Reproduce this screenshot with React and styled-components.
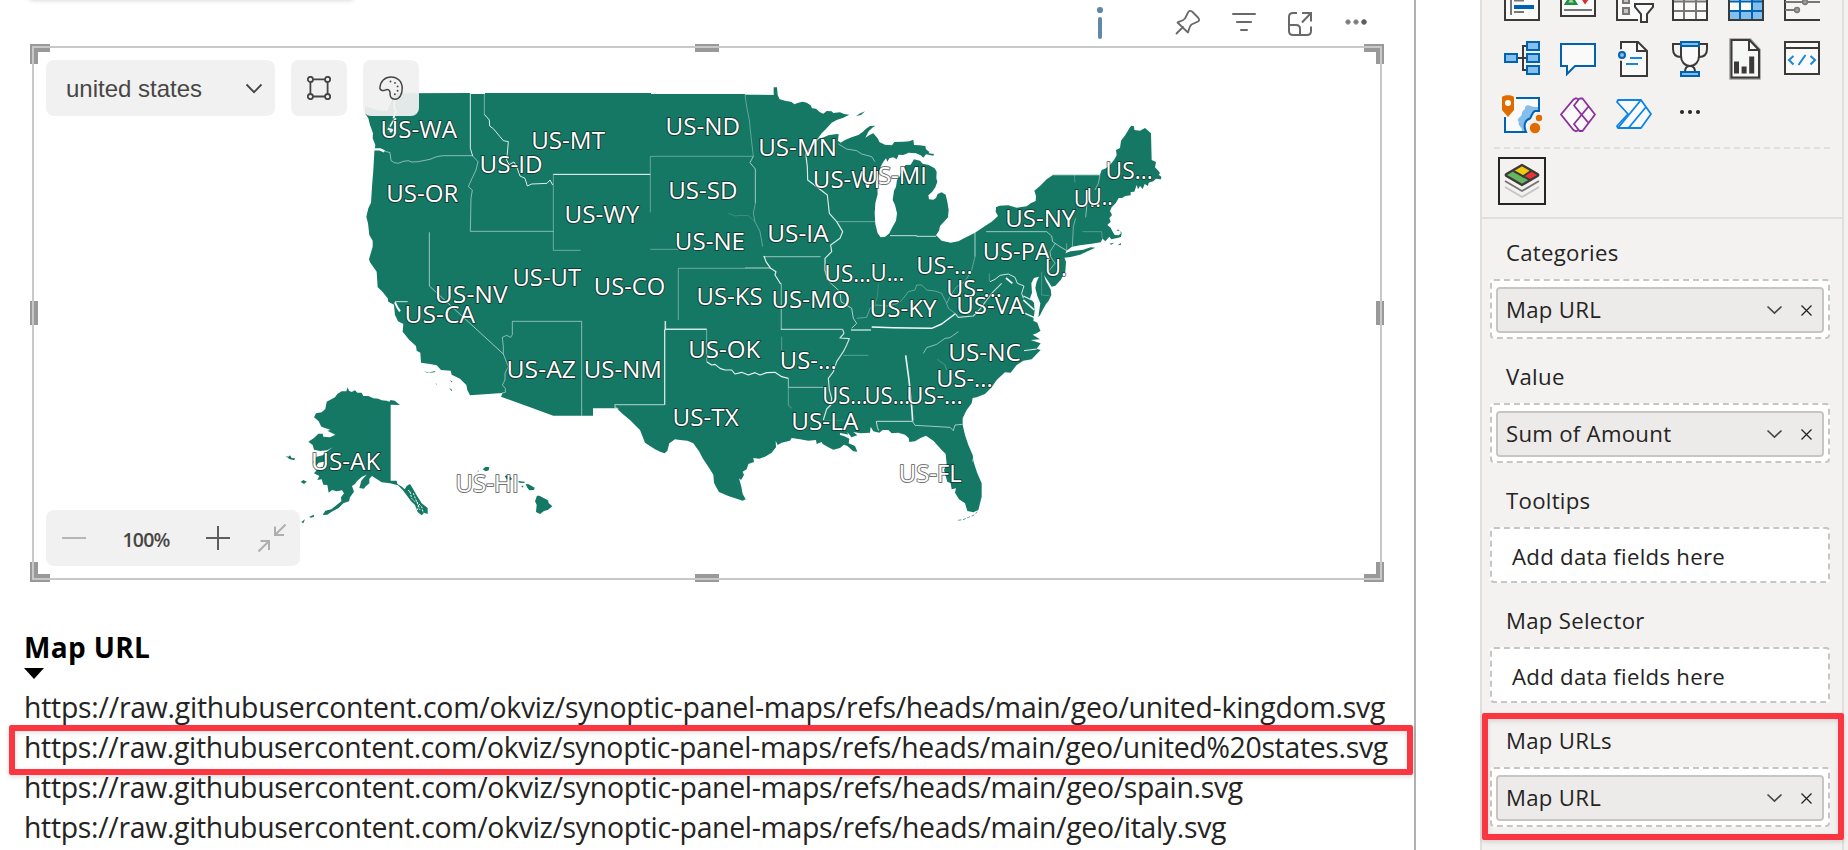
import React from "react";
import styled, { createGlobalStyle, css } from "styled-components";

const GlobalStyle = createGlobalStyle`
  * { box-sizing: border-box; }
  body {
    margin: 0;
    overflow: hidden;
    background: #fff;
    color: #252423;
    font-family: "Open Sans", "Noto Sans", sans-serif;
  }
  svg { display: block; }
`;

/* ---------- page ---------- */

const Page = styled.div`
  display: flex;
  width: 1848px;
  height: 850px;
  overflow: hidden;
`;

const Canvas = styled.main`
  position: relative;
  width: 1416px;
  height: 850px;
  border-right: 2px solid #b3b0ad;
`;

const CardAbove = styled.div`
  position: absolute;
  left: 30px;
  top: -20px;
  width: 323px;
  height: 20px;
  box-shadow: 0 0 5px rgba(0, 0, 0, 0.2);
`;

const calloutFrame = css`
  &::after {
    content: "";
    position: absolute;
    inset: ${(p) => p.$inset};
    border: 6px solid #fb3640;
    border-radius: 2px;
    box-shadow: 0 2px 5px rgba(0, 0, 0, 0.14), inset 0 2px 5px rgba(0, 0, 0, 0.12);
    pointer-events: none;
  }
`;

/* ---------- visual ---------- */

const VisualHeader = styled.header`
  display: flex;
  justify-content: flex-end;
  align-items: flex-start;
  height: 46px;
  padding: 6px 42px 0 0;
`;

const HeaderIcon = styled.span`
  width: 32px;
  height: 36px;
  margin-left: ${(p) => p.$gap || 24}px;
`;

const VisualFrame = styled.section`
  position: relative;
  width: 1350px;
  height: 534px;
  margin-left: 32px;
  border: 2px solid #c8c8c8;
`;

const Handle = styled.i`
  position: absolute;
  z-index: -1;
  background: #999;
  width: ${(p) => (p.$tall ? 8 : 24)}px;
  height: ${(p) => (p.$tall ? 24 : 8)}px;
  ${(p) => p.$side}: -4px;
  ${(p) => (p.$tall ? "top: 253px;" : "left: 661px;")}
`;

const Corner = styled.i`
  position: absolute;
  z-index: -1;
  width: 20px;
  height: 20px;
  border: 0 solid #999;
  ${(p) => p.$v}: -4px;
  ${(p) => p.$h}: -4px;
  border-${(p) => p.$v}-width: 8px;
  border-${(p) => p.$h}-width: 8px;
`;

const MapBar = styled.div`
  position: absolute;
  left: 12px;
  display: flex;
  height: 56px;
  ${(p) => p.$edge}: 12px;
  gap: 16px;
`;

const BarBox = styled.div`
  display: flex;
  align-items: center;
  justify-content: space-between;
  width: ${(p) => p.$width}px;
  height: 56px;
  padding: ${(p) => p.$pad || "0"};
  border-radius: 8px;
  background: rgba(240, 240, 240, 0.94);
  color: #484644;
`;

const MapName = styled.span`
  padding-top: 2px;
  font: 24px/54px "Liberation Sans", Arial, sans-serif;
`;

const ZoomValue = styled.span`
  flex: 1;
  padding-top: 3px;
  font-size: 19.5px;
  font-weight: 600;
  line-height: 53px;
  letter-spacing: -0.8px;
  text-align: center;
`;

const ResetZoom = styled.span`
  margin-left: 28px;
`;

/* ---------- url table ---------- */

const UrlTable = styled.section`
  padding: 47px 0 0 24px;
`;

const ColumnTitle = styled.h2`
  margin: 0;
  color: #000;
  font-size: 28px;
  font-weight: 700;
  line-height: 40px;
  letter-spacing: 0.35px;
`;

const SortArrow = styled.div`
  width: 20px;
  height: 11px;
  margin: 1px 0 8px 0;
  background: #000;
  clip-path: polygon(0 0, 100% 0, 50% 100%);
`;

const UrlRow = styled.div`
  position: relative;
  height: 40px;
  font-size: 28.4px;
  line-height: 41px;
  letter-spacing: ${(p) => p.$tracking}px;
  white-space: nowrap;
  ${(p) => p.$inset && calloutFrame}
`;

/* ---------- visualizations pane ---------- */

const PaneArea = styled.aside`
  width: 368px;
  margin-left: 64px;
  padding-right: 4px;
  background: #f3f2f1;
`;

const Pane = styled.div`
  height: 850px;
  border: solid #e1dfdd;
  border-width: 0 2px;
`;

const Gallery = styled.div`
  height: 219px;
  border-bottom: 2px solid #e1dfdd;
`;

const IconGrid = styled.div`
  display: grid;
  grid-template-columns: repeat(6, 36px);
  grid-auto-rows: 36px;
  gap: 20px;
  margin-top: -15px;
  padding-left: 22px;
`;

const GridWrap = styled.div`
  display: flex;
  height: 147px;
`;

const GalleryRule = styled.div`
  height: 2px;
  margin: 0 12px;
  background: repeating-linear-gradient(90deg, #e1dfdd 0 6px, transparent 6px 10px);
`;

const SelectedVisual = styled.div`
  width: 48px;
  height: 48px;
  margin: 8px 0 0 16px;
  border: 2px solid #252423;
`;

const Wells = styled.div`
  display: flex;
  flex-direction: column;
  gap: 20px;
  padding: 16px 12px 0 8px;
`;

const Well = styled.div`
  position: relative;
  font-size: 22.2px;
  letter-spacing: 0.28px;
  ${(p) => p.$inset && calloutFrame}
`;

const WellLabel = styled.div`
  height: 44px;
  padding-left: 16px;
  line-height: 35px;
`;

const DropZone = styled.div`
  height: ${(p) => (p.$filled ? 60 : 56)}px;
  padding: ${(p) => (p.$filled ? "6px 4px" : "0 20px")};
  border: 2px dashed #c8c6c4;
  border-radius: 4px;
  background: #fff;
  line-height: 55px;
`;

const FieldPill = styled.div`
  display: flex;
  align-items: center;
  justify-content: space-between;
  height: 46px;
  padding: 0 10px 0 8px;
  border: 2px solid #c8c6c4;
  border-radius: 4px;
  background: #edebe9;
  line-height: 46px;
`;

/* ---------- map geometry ---------- */

// The map is kept in survey sheets; each has its own origin on the drawing.
const SHEETS = {
  nw: [1020, 210],
  north: [1920, 210],
  ne: [2820, 240],
  sw: [720, 930],
  south: [1920, 930],
};

const place = (sheet, points) => {
  const [dx, dy] = SHEETS[sheet];
  return points
    .trim()
    .split(/\s+/)
    .map((p) => {
      const [x, y] = p.split(",").map(Number);
      return `${x + dx},${y + dy}`;
    })
    .join(" ");
};

const MAINLAND = [
  ["nw", "75,108 110,120 140,123 152,100 160,80 170,70 391,69 391,72 435,72 435,69 933,69 933,72"],
  [
    "north",
    `315,72 401,74 401,52 411,52 413,75 419,88 435,92 455,96 463,103 475,98 488,95 500,98 512,106 516,115 528,116 540,127 550,131
     560,123 575,124 580,129 600,127 612,132 628,134 610,143 590,150 575,158 560,175 545,190 533,206 548,203 565,196 585,193 596,192
     594,212 602,218 615,210 635,202 655,195 668,186 678,176 690,168 706,167 697,173 686,184 676,203 690,194 700,190 714,206 718,216
     735,224 756,226 763,216 790,215 808,214 820,209 822,225 838,226 856,228 858,238 868,246 866,250 882,252 880,257 858,253 850,263
     842,256 828,250 806,248 790,255 776,254 770,268 760,262 748,265 742,275 738,265 730,275 722,290 716,315 712,345 713,372 706,400
     704,430 706,462 713,490 722,502 736,500 748,490 757,472 768,452 771,430 765,405 758,390 762,362 768,350 771,330 780,318 784,300
     797,285 812,284 822,268 840,272 848,281 866,285 884,295 890,305 889,325 892,335 886,352 876,366 865,376 867,388 880,389 888,384
     893,372 905,367 917,374 922,395 926,420 924,442 912,455 900,468 897,482 888,496 905,512 932,518 955,514 975,503 1005,488 1035,468
     1055,455 1074,438 1067,425 1068,412 1078,407 1105,406 1130,413 1160,409 1172,400 1187,393 1188,378 1183,362 1190,356`,
  ],
  [
    "ne",
    `300,318 320,298 340,284 480,284 485,270 498,265 510,255 522,240 530,226 528,210 540,204 543,182 556,165 570,142 575,137 582,139
     583,150 600,152 615,144 633,160 635,240 648,246 645,262 655,272 660,280 656,284 664,290 663,298 648,296 640,304 626,308 624,318
     614,312 608,327 600,318 594,328 590,315 583,335 572,336 572,346 556,348 546,354 536,354 528,368 515,382 510,393 516,405 508,415
     512,425 502,435 512,443 518,455 524,465 536,466 543,460 539,452 530,452 534,448 545,458 543,471 528,475 514,478 508,470 496,484
     488,476 482,487 455,491 420,496 396,500 380,512 372,530 378,545 376,575 362,600 346,617 335,620 326,606 312,586 318,604 332,628
     334,645 326,662 318,672 308,690 300,706 295,712 298,690 301,670 292,648 286,624 290,605 297,590 282,594 274,610 276,638 270,655
     282,668 284,692 280,722 292,728 300,750`,
  ],
  [
    "south",
    `1202,62 1190,70 1178,74 1200,88 1172,90 1202,100 1190,116 1202,120 1175,148 1150,152 1130,165 1112,188 1095,187 1070,210 1055,232 1035,252 1010,262 998,264 995,280 980,300
     968,325 968,345 975,375 985,405 998,435 1002,460 1012,490 1025,520 1025,560 1015,600 1000,607 982,603 975,580 957,568 945,548
     948,535 935,538 932,520 922,515 912,480 920,462 917,432 905,420 880,392 858,377 840,385 825,394 808,396 806,384 795,374 775,368
     755,370 745,360 728,360 718,368 700,364 692,350 690,368 662,370 640,366 652,376 634,382 622,366 626,380 600,370 612,378 628,386
     626,400 645,408 652,425 640,424 622,408 612,404 600,414 580,419 565,412 548,402 545,396 530,402 528,390 505,392 480,388 455,384
     450,392 425,398 413,405 407,392 408,412 395,428 375,440 358,446 340,444 342,456 325,462 320,478 308,485 312,495 303,510 297,505
     304,530 308,552 317,568 308,572 290,566 265,558 237,546 228,530 222,518 220,494 205,470 188,445 178,425 160,400 142,392 120,390
     105,388 88,400 82,422 74,430 62,426 45,418 15,398 8,380 0,360`,
  ],
  [
    "sw",
    `1170,330 1148,312 1130,295 1059,295 1059,317 940,317 860,288 783,260 788,249 690,256 682,240 679,225 660,206 635,194 632,182
     603,180 590,166 570,162 543,158 541,128 530,122 528,108 508,90 488,65 490,42 474,34 465,15`,
  ],
  [
    "nw",
    `163,716 162,704 145,695 143,685 126,664 113,652 110,605 90,577 87,568 98,530 98,512 88,495 84,460 79,440 85,415 93,398 96,350
     100,300 103,245 106,225 98,205 99,190 90,165 85,145 75,130`,
  ],
];

const LAND = [
  ["ne", "366,534 376,520 392,514 430,509 452,502 466,503 446,512 420,524 392,531"],
  ["ne", "508,491 522,488 514,494"],
  ["ne", "534,494 543,489 542,496"],
  ["north", "648,139 658,131 675,124 664,134"],
  [
    "sw",
    `323,232 327,242 335,246 345,241 352,248 365,248 370,258 385,258 400,265 415,266 425,271 440,272 448,275 452,270 464,272 480,285
     452,284 452,512 470,512 472,522 486,530 494,538 500,528 510,522 518,535 530,556 545,580 563,594 563,612 553,608 545,616 533,606
     525,585 512,572 500,556 488,540 474,526 450,520 425,517 410,507 396,498 388,506 388,520 376,530 372,536 358,534 364,512 380,494
     366,500 352,512 345,522 336,528 342,545 330,562 327,574 310,580 296,594 275,605 262,614 248,615 256,602 274,598 290,585 304,574
     303,562 312,550 306,541 290,544 276,540 266,548 262,525 250,524 245,508 232,510 238,498 222,490 232,478 250,470 252,455 236,458
     228,468 218,456 230,440 248,436 262,424 278,412 262,421 240,423 222,419 218,405 205,395 222,384 235,371 248,371 250,380 270,382
     286,374 262,362 272,360 244,350 236,334 222,322 228,310 245,307 256,297 260,275 285,262 292,252 305,244 319,244`,
  ],
  ["sw", "137,438 145,440 150,436 155,444 165,445 163,451 148,447"],
  ["sw", "182,516 190,510 200,515 192,522"],
  ["sw", "184,636 195,628 190,640"],
  ["sw", "208,620 222,614 222,620 212,623"],
  ["sw", "728,478 737,470 748,472 746,481 737,484"],
  ["sw", "711,487 717,480 716,484"],
  ["sw", "794,498 802,496 815,504 814,510 800,508"],
  ["sw", "834,513 854,515 853,519 838,518"],
  ["sw", "843,528 850,527 849,533"],
  ["sw", "857,522 866,523 884,533 882,540 868,541 862,533"],
  ["sw", "891,557 898,557 924,571 926,579 937,589 923,600 912,603 900,612 888,606 890,584 885,574"],
  ["sw", "552,183 565,188 586,183 584,187 562,189"],
  ["sw", "586,221 590,221 590,224"],
  ["sw", "630,210 638,216 634,217"],
  ["sw", "628,234 637,240 634,243"],
];

// [sheet, points, width, opacity]
const BORDERS = [
  ["nw", "391,70 391,235 398,258"],
  ["nw", "398,258 414,275 408,300 396,325 385,350 397,360 393,385 391,484 516,484 640,484", 2.5, 0.6],
  ["nw", "133,243 150,248 153,272 163,278 175,280 190,274 205,272 215,276 235,275 270,268 290,260 310,257 398,257", 2.5, 0.6],
  ["nw", "103,238 120,238 133,244", 7, 1],
  ["nw", "433,72 433,133", 2.5, 0.5],
  ["nw", "433,133 448,150 449,168 460,176 480,200 490,212 505,215 503,240 500,270 507,284 522,276 530,290 540,318 555,325 562,348 575,342 600,341 621,340 630,330 638,345", 3, 0.85],
  ["nw", "640,313 931,313", 3, 1],
  ["nw", "640,313 640,541 722,541", 2.5, 0.45],
  ["nw", "931,427 931,259 1240,259", 2.5, 0.4],
  ["nw", "931,538 1015,538", 2.5, 0.4],
  ["nw", "1015,750 1015,595 1290,595", 2.5, 0.45],
  ["nw", "268,487 268,648 490,852", 2.5, 0.7],
  ["nw", "165,695 203,695", 3, 0.8],
  ["nw", "165,697 172,712 180,724", 6, 1],
  ["nw", "150,170 158,155 168,145", 5, 0.9],
  ["nw", "143,176 157,180 150,186", 7, 0.9],
  ["nw", "165,85 162,110 168,125 160,145", 6, 0.9],
  ["sw", "785,249 796,247 796,235 787,225 795,210 795,190 805,170 797,150 790,132 790,110 787,82 800,76 812,82 817,74 817,34 1025,34 1025,317", 2.5, 0.6],
  ["south", "76,33 76,58 200,58", 4.5, 0.8],
  ["south", "200,58 200,155", 2.5, 0.5],
  ["south", "74,58 74,284", 4, 0.8],
  ["south", "74,284 -75,284 -75,292 -65,297", 4, 0.55],
  ["south", "200,155 215,165 225,163 240,175 255,180 275,180 285,192 305,187 325,195 345,188 360,195 380,188 405,187 425,200 445,205", 3.5, 0.9],
  ["south", "445,205 445,232 550,232", 2.5, 0.7],
  ["south", "445,232 445,285 455,295", 2.5, 0.4],
  ["south", "422,58 608,58", 4, 0.65],
  ["south", "425,120 425,80", 2.5, 0.35],
  ["south", "608,58 612,70 600,84 628,86 620,105 610,125 590,155 580,185 565,205 568,240 575,265 572,285 560,297 550,330", 3.5, 0.8],
  ["south", "610,136 685,136", 2.5, 0.35],
  ["south", "695,51 760,53 810,54 875,55 905,42 945,12", 4.5, 0.95],
  ["south", "633,60 693,60", 4, 0.8],
  ["south", "850,130 860,113 890,103 915,85 930,83 955,65", 3, 0.5],
  ["south", "797,136 807,210 815,290 818,332", 5, 0.9],
  ["south", "820,334 709,334 712,352 716,362", 3, 0.75],
  ["south", "818,335 825,346 930,352 940,362 945,345 967,343", 3, 0.6],
  ["south", "892,148 915,165 920,180", 2, 0.35],
  ["south", "550,331 612,331", 2, 0.2],
  ["south", "1002,440 998,455", 4, 0.6],
  ["south", "600,372 630,378", 6, 1],
  ["south", "1152,122 1190,117", 3, 0.9],
  ["north", "315,73 401,73", 3, 0.8],
  ["north", "315,74 320,110 328,150 332,190 340,259", 2.5, 0.4],
  ["north", "340,259 330,278 346,297 346,400", 3, 0.6],
  ["north", "346,400 340,430 345,455 360,485 368,530", 2.5, 0.4],
  ["north", "265,430 285,438 300,436 325,437 345,455", 2, 0.25],
  ["north", "370,560 542,560", 4, 0.45],
  ["north", "315,593 390,593", 3, 0.35],
  ["north", "372,558 378,575 392,595 408,605 405,615 422,642", 3.5, 0.9],
  ["north", "424,640 424,778", 4, 0.4],
  ["north", "535,205 497,250 502,290 503,330 530,350 562,375 568,430 590,455 608,485 600,505 572,525 575,545 555,565 555,600 562,630", 3.5, 0.85],
  ["north", "562,630 600,665 603,695 635,715 640,745 650,760 635,775", 3, 0.65],
  ["north", "590,455 705,455", 2.5, 0.45],
  ["north", "595,222 620,237 650,242 665,252 695,260 705,275", 3, 0.5],
  ["north", "750,497 830,497 830,499 888,499", 3, 0.75],
  ["north", "1005,488 1005,560", 3, 0.65],
  ["north", "1005,560 995,600 975,635 950,650 930,680 920,700 925,715 945,730", 2.5, 0.4],
  ["north", "650,745 680,742 690,715 710,705 740,708 775,700 790,685 805,665 825,660 830,645 845,645 860,660 885,663 905,670 920,700", 2.5, 0.4],
  ["north", "715,640 712,680 705,705", 2, 0.25],
  ["north", "945,730 955,742 1000,738 1022,715 1040,690 1060,665 1085,640", 3.5, 0.75],
  ["ne", "138,455 320,455 335,468 338,485 360,500 380,512", 2.5, 0.7],
  ["ne", "346,490 330,515 332,530 345,550 322,578", 2.5, 0.6],
  ["ne", "380,490 380,515", 2, 0.5],
  ["ne", "305,575 305,645 328,647", 2, 0.35],
  ["ne", "403,285 405,308", 2, 0.35],
  ["ne", "407,415 400,440 397,500", 2.5, 0.5],
  ["ne", "480,285 475,310 465,330", 2.5, 0.55],
  ["ne", "340,285 480,285", 2.5, 0.5],
  ["ne", "442,360 437,412", 3, 0.5],
  ["ne", "427,455 485,455 487,478", 2, 0.4],
  ["ne", "148,580 148,605", 2, 0.4],
  ["ne", "150,605 165,598 180,586 205,582 225,592 232,610 252,618 245,640 250,655", 3, 0.8],
  ["ne", "198,594 217,610", 5, 1],
  ["ne", "275,660 250,648", 4, 0.9],
  ["ne", "283,690 250,660", 5, 1],
  ["ne", "282,712 255,700", 4, 1],
];

const SPECKLES = [
  "510,545 515,565 525,575",
  "520,550 530,575 540,600",
  "505,540 512,550",
  "530,575 545,590 550,610",
  "536,585 532,600",
];

const LABELS = [
  ["nw", "US-WA", 125, 348, 205],
  ["nw", "US-MT", 577, 792, 237],
  ["nw", "US-ID", 422, 605, 308],
  ["nw", "US-OR", 142, 352, 396],
  ["nw", "US-WY", 677, 895, 459],
  ["nw", "US-UT", 521, 720, 648],
  ["nw", "US-CO", 765, 973, 674],
  ["nw", "US-NV", 288, 500, 698],
  ["nw", "US-CA", 197, 402, 760],
  ["north", "US-ND", 80, 297, 195],
  ["north", "US-MN", 358, 588, 258],
  ["north", "US-SD", 88, 290, 387],
  ["north", "US-WI", 522, 718, 354],
  ["north", "US-MI", 665, 858, 343],
  ["north", "US-NE", 108, 312, 540],
  ["north", "US-IA", 385, 563, 516],
  ["north", "US...", 557, 690, 636],
  ["north", "U...", 695, 790, 633],
  ["north", "US-...", 832, 995, 612],
  ["north", "US-...", 922, 1083, 681],
  ["north", "US-KS", 173, 365, 706],
  ["north", "US-MO", 398, 628, 713],
  ["north", "US-KY", 692, 887, 741],
  ["north", "US-VA", 952, 1150, 731],
  ["ne", "US-PA", 132, 327, 540],
  ["ne", "US-NY", 199, 403, 441],
  ["ne", "US...", 500, 635, 298],
  ["ne", "U..", 405, 480, 380],
  ["ne", "U..", 443, 515, 374],
  ["ne", "U.", 318, 378, 588],
  ["south", "US-OK", 148, 358, 144],
  ["south", "US-NC", 928, 1140, 153],
  ["south", "US-...", 423, 587, 178],
  ["south", "US-...", 892, 1055, 232],
  ["south", "US-...", 802, 965, 281],
  ["south", "US...", 550, 680, 282],
  ["south", "US...", 677, 807, 282],
  ["south", "US-TX", 101, 293, 349],
  ["south", "US-LA", 457, 652, 361],
  ["south", "US-FL", 780, 962, 515],
  ["sw", "US-AK", 217, 418, 480],
  ["sw", "US-AZ", 803, 1005, 205],
  ["sw", "US-NM", 1035, 1263, 205],
  ["sw", "US-HI", 650, 833, 545],
];

const Land = styled.g`
  fill: #147865;
`;

const BorderLines = styled.g`
  fill: none;
  stroke: #fff;
  stroke-linejoin: round;
`;

const StateLabel = styled.text`
  font-family: "Open Sans", "Noto Sans", sans-serif;
  font-size: 70px;
  fill: #fff;
  stroke: rgba(20, 20, 20, 0.6);
  stroke-width: 6px;
  stroke-linejoin: round;
  paint-order: stroke;
`;

function StateMap() {
  const outline = MAINLAND.map(([s, pts]) => place(s, pts)).join(" ");
  return (
    <svg width="1346" height="530" viewBox="102 144 4038 1590">
      <Land>
        <polygon points={outline} />
        {LAND.map(([s, pts], i) => (
          <polygon key={i} points={place(s, pts)} />
        ))}
        <polyline points={place("south", "955,631 972,628 985,622 1000,616 1012,606")} fill="none" stroke="#147865" strokeWidth="3" strokeDasharray="9 5" opacity="0.7" />
      </Land>
      <BorderLines>
        {BORDERS.map(([s, pts, w = 3, o = 0.85], i) => (
          <polyline key={i} points={place(s, pts)} strokeWidth={w} opacity={o} />
        ))}
        {SPECKLES.map((pts, i) => (
          <polyline key={i} points={place("sw", pts)} strokeWidth="3" strokeDasharray="6 4" />
        ))}
      </BorderLines>
      {LABELS.map(([s, text, x1, x2, y], i) => {
        const [dx, dy] = SHEETS[s];
        return (
          <StateLabel key={i} x={x1 + dx - 3.5} y={y + dy} textLength={x2 - x1 + 6.5} lengthAdjust="spacingAndGlyphs">
            {text}
          </StateLabel>
        );
      })}
    </svg>
  );
}

/* ---------- icons ---------- */

const Glyph = ({ w, h, color = "#484644", sw = 2, children, ...rest }) => (
  <svg width={w} height={h} viewBox={`0 0 ${w} ${h}`} fill="none" stroke={color} strokeWidth={sw} {...rest}>
    {children}
  </svg>
);

const ChevronIcon = ({ w = 16, h = 9, sw = 1.8 }) => (
  <Glyph w={w} h={h} sw={sw} overflow="visible">
    <path d={`M0.5 0.5 L${w / 2} ${h - 0.8} L${w - 0.5} 0.5`} />
  </Glyph>
);

const CloseIcon = () => (
  <Glyph w={11} h={11} sw={1.3} color="#252423">
    <path d="M0.5 0.5 L10.5 10.5 M10.5 0.5 L0.5 10.5" />
  </Glyph>
);

const FrameIcon = () => (
  <Glyph w={24} h={24} sw={1.8}>
    <path d="M6 3.3 H18 M6 20.5 H18 M3.4 6 V18 M20.6 6 V18" />
    <circle cx="3.4" cy="3.4" r="2.6" />
    <circle cx="20.6" cy="3.4" r="2.6" />
    <circle cx="3.4" cy="20.6" r="2.6" />
    <circle cx="20.6" cy="20.6" r="2.6" />
  </Glyph>
);

const PaletteIcon = () => (
  <Glyph w={24} h={24} sw={1.5}>
    <path d="M0.9 11.8 C1.2 5.5 5.8 0.9 12 0.9 C18.5 0.9 23.2 5.6 23.2 12.2 C23.2 18.6 20.5 23.2 16 23.2 C12.2 23.2 11 20.5 11.1 17.8 C11.2 15.6 10.4 13.4 8.2 13.5 C6.2 13.6 5.2 15 3.2 14.5 C1.6 14.1 0.8 13.2 0.9 11.8 Z" />
    <g fill="#484644" stroke="none">
      <circle cx="11.5" cy="5.5" r="0.95" />
      <circle cx="16" cy="6.9" r="0.95" />
      <circle cx="18.6" cy="10.4" r="0.95" />
      <circle cx="18.6" cy="14.8" r="0.95" />
      <circle cx="15.8" cy="18.2" r="0.95" />
    </g>
  </Glyph>
);

const INK = "#3b3a39";
const BLUE = "#0063b1";
const SKY = "#83beec";
const GREY = "#797775";

const VisualIcon = ({ children, color = INK, sw = 2 }) => (
  <Glyph w={36} h={36} color={color} sw={sw} overflow="visible">
    {children}
  </Glyph>
);

const TableLines = () => <path d="M12 1 V35 M24 1 V35 M1 16.5 H35 M1 26 H35" />;

const GALLERY = [
  <VisualIcon>
    <rect x="1" y="1" width="34" height="34" fill="#fafafa" />
    <path d="M7 4 V30 M10 15.6 H20 M10 27 H20" stroke={GREY} />
    <path d="M10 22 H30" stroke={BLUE} strokeWidth="4" />
  </VisualIcon>,
  <VisualIcon>
    <rect x="1" y="4" width="34" height="27" fill="#fafafa" />
    <path d="M6 18.7 L11 11 L16 18.7 Z" fill="#a0d9a8" stroke="#218d43" strokeWidth="2.4" />
    <path d="M25 19.5 L21.5 14 L29 14 Z" fill="#d92c2c" stroke="none" />
    <path d="M4 25 H32" stroke={GREY} />
  </VisualIcon>,
  <VisualIcon>
    <path d="M22 35 H1 V1 H35 V15" fill="#fafafa" />
    <path d="M22 35 V10 H34 V16" fill="#fafafa" stroke="none" />
    <rect x="7" y="9" width="6" height="9" fill="#c8c6c4" stroke={GREY} />
    <rect x="7" y="23" width="6" height="6" fill="#c8c6c4" stroke={GREY} />
    <path d="M19 19 H37 V22 L31 29 V37 H25 V29 L19 22 Z" fill="#fafafa" />
  </VisualIcon>,
  <VisualIcon>
    <rect x="1" y="1" width="34" height="34" fill="#fafafa" stroke="none" />
    <g stroke={GREY}><TableLines /></g>
    <rect x="1" y="1" width="34" height="34" />
  </VisualIcon>,
  <VisualIcon>
    <rect x="1" y="1" width="34" height="34" fill="#fafafa" stroke="none" />
    <path d="M24 1 H35 V35 H1 V26 H24 Z" fill={SKY} stroke="none" />
    <g stroke={BLUE}><TableLines /></g>
    <rect x="1" y="1" width="34" height="34" />
  </VisualIcon>,
  <VisualIcon>
    <rect x="1" y="1" width="35" height="34" fill="#f6f5f4" stroke="none" />
    <path d="M36 35 H1 V1" />
    <path d="M1 17 H36 M1 25 H13" stroke={GREY} />
    <circle cx="21" cy="17" r="2.4" fill="#a19f9d" stroke={GREY} strokeWidth="1.5" />
    <circle cx="13" cy="25" r="2.4" fill="#a19f9d" stroke={GREY} strokeWidth="1.5" />
  </VisualIcon>,

  <VisualIcon>
    <path d="M14 17 H22 M22 5 H19 V29 H22" />
    <g fill={SKY} stroke={BLUE}>
      <rect x="1" y="13" width="12" height="8" />
      <rect x="23" y="1" width="12" height="8" />
      <rect x="23" y="13" width="12" height="8" />
      <rect x="23" y="25" width="12" height="8" />
    </g>
  </VisualIcon>,
  <VisualIcon color={BLUE}>
    <path d="M1 3 H35 V25 H15 L7 33 V25 H1 Z" fill="#fafafa" />
  </VisualIcon>,
  <VisualIcon>
    <path d="M5 35 V1 H22 L31 10 V35 Z" fill="#fafafa" />
    <path d="M21 1 V10 H31" />
    <circle cx="6" cy="14" r="6" fill="#f3f2f1" stroke="none" />
    <circle cx="6" cy="14" r="3" fill={SKY} stroke={BLUE} />
    <path d="M14 17 H26 M10 23 H22" stroke="#1a86d9" />
  </VisualIcon>,
  <VisualIcon>
    <path d="M9 1 V15 C9 21 13 25 18 25 C23 25 27 21 27 15 V1 Z" fill="#fafafa" />
    <path d="M9 3 H1 V8 C1 13 4 16 9 16 M27 3 H35 V8 C35 13 32 16 27 16" />
    <path d="M13 31 C13 27 15 25 18 25 C21 25 23 27 23 31" fill="#fafafa" />
    <path d="M9 1 H27 V5 H9 Z M9 31 H27 V35 H9 Z" fill={SKY} stroke={BLUE} />
  </VisualIcon>,
  <VisualIcon>
    <path d="M3 37 V-1 H22 L31 9 V37 Z" fill="#f6f8f5" stroke="#a19f9d" strokeWidth="3.6" />
    <path d="M3.5 36.5 V-1 H21.5 L31 9 V36.5 Z" fill="#f6f8f5" />
    <path d="M21 0 V9 H31" />
    <path d="M6 20.5 h5 v12 h-5 Z M13.6 25.5 h5 v7 h-5 Z M21.2 15.5 h5 v17 h-5 Z" fill={INK} stroke="none" />
  </VisualIcon>,
  <VisualIcon>
    <rect x="1" y="1" width="34" height="32" fill="#fafafa" />
    <path d="M1 7 H35" />
    <path d="M9.5 15 L5 19 L9.5 23.5 M21.5 14 L14.5 24 M26.5 15 L31 19 L26.5 23.5" stroke="#1a86d9" />
  </VisualIcon>,

  <VisualIcon color={BLUE}>
    <path d="M2 2 H35 V14 L26 20 L22 35 H1 V10 Z" fill="#fafafa" stroke="none" />
    <path d="M35 14 H29 C27 17 27 20 25 22 C21 24 19 28 21 35 H18 C19 30 13 29 15 25 C11 21 18 21 18 16 C18 13 22 13 21 10 C24 6 27 10 31 10 H35 Z" fill={SKY} stroke="none" />
    <path d="M12 1 H35 V14 H31 C28 15 28 19 26 21.5 C21 23 19 28 22 35 H1 V20" />
    <path d="M-2 0 C0 -2.300 8 -2.300 10 0 V13 L4 20 L-2 13 Z" fill="#e06c00" stroke="none" />
    <circle cx="4" cy="6" r="3" fill="#fff" stroke="none" />
    <circle cx="35" cy="21" r="3.2" fill="#e06c00" stroke="none" />
    <circle cx="31" cy="31" r="7" fill="#f3f2f1" stroke="none" />
    <circle cx="31" cy="31" r="5.2" fill="#e06c00" stroke="none" />
  </VisualIcon>,
  <VisualIcon color="#8c2f9c" sw={1.8}>
    <path d="M19 2.5 L16 1.2 L13.5 2.5 L1 17.5 L13.5 33 L16 34.3 L19 33" fill="#fafafa" />
    <path d="M19.5 1.5 H22.5 L35 17.5 L22.5 34 H19.5 L14 27 L28.5 9.5 M19.5 1.5 L14 8.5 L28.5 26" fill="#fafafa" strokeLinejoin="round" />
  </VisualIcon>,
  <VisualIcon color="#0a84e8" sw={1.8}>
    <path d="M2 3 H25 L35 17 L25 31 H2 L1 29 L12 17 L1 5 Z" fill="#fafafa" strokeLinejoin="round" />
    <path d="M25 3 L2 31 M30 10 L12.5 31" />
  </VisualIcon>,
  <VisualIcon color="none">
    <g fill="#252423">
      <circle cx="10" cy="15" r="2" />
      <circle cx="18" cy="15" r="2" />
      <circle cx="26" cy="15" r="2" />
    </g>
  </VisualIcon>,
];

const SynopticIcon = () => (
  <svg width="44" height="44" viewBox="0 0 44 44" fill="none" strokeWidth="2" strokeLinejoin="round">
    <path d="M5 28 L22 38 L39 28" stroke="#c8c6c4" />
    <path d="M5 22 L22 32 L39 22" stroke="#797775" />
    <path d="M22 6 L38 16 L22 26 L6 16 Z" fill="#64b75f" />
    <path d="M22 6 L30.5 11.3 L22.5 17.3 L13.5 12 Z" fill="#f2c811" />
    <path d="M31.5 12 L38 16 L30 20.5 L25 17 Z" fill="#ee3035" />
    <path d="M13.5 12 L30 21 M31 12 L22 18" stroke="#3b3a39" />
    <path d="M22 6 L37.5 15 Q39 16 37.5 17 L22 26 L6.500 17 Q5 16 6.500 15 Z" stroke="#3b3a39" strokeWidth="2.4" />
  </svg>
);

/* ---------- content ---------- */

const BASE = "https://raw.githubusercontent.com/okviz/synoptic-panel-maps/refs/heads/main/geo/";
const URLS = [
  { file: "united-kingdom.svg", tracking: -0.24 },
  { file: "united%20states.svg", tracking: -0.312, inset: "-2px 1px -8px -15px" },
  { file: "spain.svg", tracking: -0.3 },
  { file: "italy.svg", tracking: -0.3 },
];

const WELLS = [
  { label: "Categories", field: "Map URL" },
  { label: "Value", field: "Sum of Amount" },
  { label: "Tooltips" },
  { label: "Map Selector" },
  { label: "Map URLs", field: "Map URL", inset: "-10px -14px -13px -8px" },
];

const PillActions = styled.span`
  display: flex;
  align-items: center;
  gap: 19px;
`;

function FieldWell({ label, field, inset }) {
  return (
    <Well $inset={inset}>
      <WellLabel>{label}</WellLabel>
      <DropZone $filled={!!field}>
        {field ? (
          <FieldPill>
            {field}
            <PillActions>
              <ChevronIcon w={15} h={8} sw={1.6} />
              <CloseIcon />
            </PillActions>
          </FieldPill>
        ) : (
          "Add data fields here"
        )}
      </DropZone>
    </Well>
  );
}

function HeaderActions() {
  return (
    <VisualHeader>
      <HeaderIcon>
        <svg width="32" height="36" fill="#6288a7">
          <circle cx="16" cy="4" r="3.1" />
          <rect x="14" y="11" width="4" height="22" rx="2" />
        </svg>
      </HeaderIcon>
      <HeaderIcon $gap={56}>
        <Glyph w={32} h={36} color="#6b6967" sw={1.8} strokeLinejoin="round" strokeLinecap="round">
          <path d="M4.500 27.500 L11 21 M5.500 16.500 C8 15 10.500 15.500 13 12.500 L16 6.500 C17 4.700 18.500 4.500 20 5.500 L26 11.500 C27.500 13 27.500 14.500 26 15.500 L19.500 18.500 C17 20.500 17 24 16 26.500 Z" />
        </Glyph>
      </HeaderIcon>
      <HeaderIcon>
        <Glyph w={32} h={36} color="#6b6967" strokeLinecap="round">
          <path d="M5 8 H27 M9 16 H23 M13 24 H19" />
        </Glyph>
      </HeaderIcon>
      <HeaderIcon>
        <Glyph w={32} h={36} color="#6b6967">
          <path d="M13 7 H9 C6.500 7 5 8.500 5 11 V25 C5 27.500 6.500 29 9 29 H23 C25.500 29 27 27.500 27 25 V20.500" />
          <path d="M5 19 H12 C14.500 19 16 20 16 22.500 V29 M18 7 H27 V15.500 M27 7 L18 16.500" />
        </Glyph>
      </HeaderIcon>
      <HeaderIcon>
        <svg width="32" height="36" fill="#797775" stroke="#a19f9d">
          <circle cx="8" cy="16" r="2.3" />
          <circle cx="16" cy="16" r="2.3" />
          <circle cx="24" cy="16" r="2.3" fill="#605e5c" stroke="#605e5c" />
        </svg>
      </HeaderIcon>
    </VisualHeader>
  );
}

export default function App() {
  return (
    <Page>
      <GlobalStyle />
      <Canvas>
        <CardAbove />
        <HeaderActions />
        <VisualFrame>
          {["top", "bottom"].map((v) =>
            ["left", "right"].map((h) => <Corner key={v + h} $v={v} $h={h} />)
          )}
          <Handle $side="top" />
          <Handle $side="bottom" />
          <Handle $side="left" $tall />
          <Handle $side="right" $tall />
          <StateMap />
          <MapBar $edge="top">
            <BarBox $width={229} $pad="0 13px 0 20px">
              <MapName>united states</MapName>
              <ChevronIcon />
            </BarBox>
            <BarBox $width={56} $pad="0 16px"><FrameIcon /></BarBox>
            <BarBox $width={56} $pad="0 16px"><PaletteIcon /></BarBox>
          </MapBar>
          <MapBar $edge="bottom">
            <BarBox $width={254} $pad="0 14px 0 16px">
              <Glyph w={24} h={24} color="#b8b6b4"><path d="M0 12 H24" /></Glyph>
              <ZoomValue>100%</ZoomValue>
              <Glyph w={24} h={24} color="#605e5c"><path d="M0 12 H24 M12 0 V24" /></Glyph>
              <ResetZoom>
                <Glyph w={28} h={28} color="#b0aeac"><path d="M27.500 0.500 L17 11 M17 2.500 V11 H26 M0.500 27.500 L11 17 M2.500 17 H11 V26" /></Glyph>
              </ResetZoom>
            </BarBox>
          </MapBar>
        </VisualFrame>
        <UrlTable>
          <ColumnTitle>Map URL</ColumnTitle>
          <SortArrow />
          {URLS.map(({ file, tracking, inset }) => (
            <UrlRow key={file} $tracking={tracking} $inset={inset}>
              {BASE + file}
            </UrlRow>
          ))}
        </UrlTable>
      </Canvas>
      <PaneArea>
        <Pane>
          <Gallery>
            <GridWrap>
              <IconGrid>
                {GALLERY.map((icon, i) => (
                  <React.Fragment key={i}>{icon}</React.Fragment>
                ))}
              </IconGrid>
            </GridWrap>
            <GalleryRule />
            <SelectedVisual><SynopticIcon /></SelectedVisual>
          </Gallery>
          <Wells>
            {WELLS.map((well) => (
              <FieldWell key={well.label} {...well} />
            ))}
          </Wells>
        </Pane>
      </PaneArea>
    </Page>
  );
}
